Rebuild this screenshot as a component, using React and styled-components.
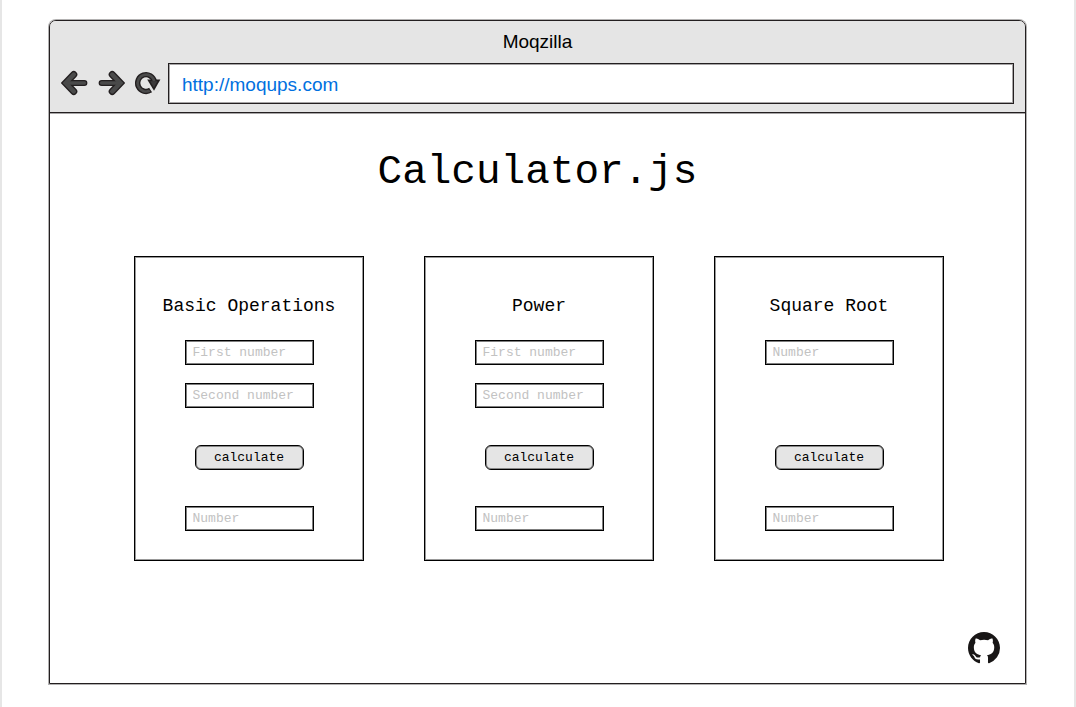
import React from "react";
import styled, { createGlobalStyle } from "styled-components";

const GlobalStyle = createGlobalStyle`
  *, *::before, *::after { box-sizing: border-box; }
  body { margin: 0; background: #fff; color: #000; }
`;

const mono = `"Liberation Mono", "Courier New", monospace`;
const sans = `"Liberation Sans", Arial, sans-serif`;

const Page = styled.div`
  min-height: 100vh;
  padding: 20px 48px 23px 47px;
  border: solid #e6e6e6;
  border-width: 0 2px;
  display: flex;
  flex-direction: column;
`;

const BrowserWindow = styled.div`
  flex: 1;
  display: flex;
  flex-direction: column;
  border: 1px solid #231f20;
  border-radius: 7px 7px 0 0;
  box-shadow: 0 0 0 1px rgba(35, 31, 32, 0.35);
  overflow: hidden;
`;

const Chrome = styled.header`
  background: #e5e5e5;
  border-bottom: 1px solid #231f20;
  box-shadow: 0 1px 0 rgba(35, 31, 32, 0.4);
  padding: 10px 11px 8px;
`;

const WindowTitle = styled.div`
  font: 19px/22px ${sans};
  text-align: center;
  margin-bottom: 10px;
`;

const Toolbar = styled.div`
  display: flex;
  align-items: center;
  gap: 8px;
`;

const NavButtons = styled.div`
  display: flex;
  gap: 10px;
  padding-bottom: 2px;
`;

const IconButton = styled.button`
  display: block;
  padding: 0;
  border: 0;
  background: none;

  svg { display: block; }
`;

const AddressBar = styled.input`
  flex: 1;
  min-width: 0;
  height: 41px;
  padding: 2px 13px 0;
  border: 1px solid #231f20;
  border-radius: 0;
  box-shadow: inset 0 0 0 1px rgba(35, 31, 32, 0.4);
  background: #fff;
  color: #0070e0;
  font: 19px/22px ${sans};
`;

const Content = styled.main`
  flex: 1;
  display: flex;
  flex-direction: column;
`;

const Title = styled.h1`
  margin: 36px 0 60px;
  font: 41px/47px ${mono};
  text-align: center;
`;

const Cards = styled.div`
  display: grid;
  grid-template-columns: repeat(3, 1fr);
  gap: 60px;
  padding: 0 81px 0 84px;
`;

const Card = styled.form`
  display: flex;
  flex-direction: column;
  align-items: center;
  padding: 38px 0 29px;
  border: 1px solid #000;
  box-shadow: inset 0 0 0 1px rgba(0, 0, 0, 0.4);
`;

const CardTitle = styled.h2`
  margin: 0 0 23px;
  font: 18px/22px ${mono};
`;

const Fields = styled.div`
  display: flex;
  flex-direction: column;
  gap: 18px;
  min-height: 68px;
`;

const Field = styled.input`
  width: 129px;
  height: 25px;
  padding: 0 7px 1px;
  border: 1px solid #000;
  border-radius: 0;
  box-shadow: inset 0 0 0 1px rgba(0, 0, 0, 0.5);
  background: #fff;
  font: 13px/16px ${mono};

  &::placeholder { color: #c2c2c2; opacity: 1; }
`;

const CalculateButton = styled.button`
  width: 109px;
  height: 25px;
  margin: 37px 0 36px;
  padding: 0;
  border: 1px solid #000;
  border-radius: 6px;
  box-shadow: inset 0 0 0 1px rgba(0, 0, 0, 0.4);
  background: #e5e5e5;
  color: #000;
  font: 13px/16px ${mono};
`;

const Footer = styled.footer`
  display: flex;
  justify-content: flex-end;
  margin-top: auto;
  padding: 0 25px 19px;
`;

const IconLink = styled.a`
  display: block;
  color: #181616;

  svg { display: block; }
`;

function ArrowIcon({ flip }) {
  return (
    <svg width="27" height="26" viewBox="0 0 27 26" fill="none" strokeLinecap="round">
      <g transform={flip ? "translate(27 0) scale(-1 1)" : undefined}>
        <g stroke="#231f20">
          <path d="M12.8 4.5 4.6 13l8.2 8.5" strokeWidth="7" />
          <path d="M6 13h17.4" strokeWidth="6" />
        </g>
        <g stroke="#4a4a4a">
          <path d="M12.8 4.5 4.6 13l8.2 8.5" strokeWidth="4.4" />
          <path d="M6 13h17.4" strokeWidth="3.4" />
        </g>
      </g>
    </svg>
  );
}

function ReloadIcon() {
  return (
    <svg width="25" height="26" viewBox="0 0 25 26" fill="none" overflow="visible">
      <path d="M19.3 11.5A8.4 8.4 0 1 0 15.6 20.1" stroke="#231f20" strokeWidth="5.4" />
      <path d="M12.2 9.6H25.4L19 20.8Z" fill="#231f20" />
      <path d="M19.3 11.5A8.4 8.4 0 1 0 14.8 20.6" stroke="#4a4a4a" strokeWidth="2.6" />
      <path d="M15.2 11.2h7.2l-3.5 6.2Z" fill="#3c3a3b" />
    </svg>
  );
}

function GitHubIcon() {
  return (
    <svg width="32" height="32" viewBox="0 0 16 16" fill="currentColor">
      <path d="M8 0C3.58 0 0 3.58 0 8c0 3.54 2.29 6.53 5.47 7.59.4.07.55-.17.55-.38 0-.19-.01-.82-.01-1.49-2.01.37-2.53-.49-2.69-.94-.09-.23-.48-.94-.82-1.13-.28-.15-.68-.52-.01-.53.63-.01 1.08.58 1.23.82.72 1.21 1.87.87 2.33.66.07-.52.28-.87.51-1.07-1.78-.2-3.64-.89-3.64-3.95 0-.87.31-1.59.82-2.15-.08-.2-.36-1.02.08-2.12 0 0 .67-.21 2.2.82.64-.18 1.32-.27 2-.27.68 0 1.36.09 2 .27 1.53-1.04 2.2-.82 2.2-.82.44 1.1.16 1.92.08 2.12.51.56.82 1.27.82 2.15 0 3.07-1.87 3.75-3.65 3.95.29.25.54.73.54 1.48 0 1.07-.01 1.93-.01 2.2 0 .21.15.46.55.38A8.013 8.013 0 0 0 16 8c0-4.42-3.58-8-8-8z" />
    </svg>
  );
}

const operations = [
  { title: "Basic Operations", fields: ["First number", "Second number"] },
  { title: "Power", fields: ["First number", "Second number"] },
  { title: "Square Root", fields: ["Number"] },
];

function OperationCard({ title, fields }) {
  return (
    <Card aria-label={title} onSubmit={(e) => e.preventDefault()}>
      <CardTitle>{title}</CardTitle>
      <Fields>
        {fields.map((label) => (
          <Field key={label} type="text" placeholder={label} aria-label={label} />
        ))}
      </Fields>
      <CalculateButton type="submit">calculate</CalculateButton>
      <Field type="text" placeholder="Number" aria-label="Result" readOnly />
    </Card>
  );
}

export default function App() {
  return (
    <>
      <GlobalStyle />
      <Page>
        <BrowserWindow>
          <Chrome>
            <WindowTitle>Moqzilla</WindowTitle>
            <Toolbar>
              <NavButtons>
                <IconButton type="button" aria-label="Back"><ArrowIcon /></IconButton>
                <IconButton type="button" aria-label="Forward"><ArrowIcon flip /></IconButton>
                <IconButton type="button" aria-label="Reload"><ReloadIcon /></IconButton>
              </NavButtons>
              <AddressBar type="text" aria-label="Address" defaultValue="http://moqups.com" />
            </Toolbar>
          </Chrome>
          <Content>
            <Title>Calculator.js</Title>
            <Cards>
              {operations.map((op) => (
                <OperationCard key={op.title} {...op} />
              ))}
            </Cards>
            <Footer>
              <IconLink href="#github" aria-label="GitHub"><GitHubIcon /></IconLink>
            </Footer>
          </Content>
        </BrowserWindow>
      </Page>
    </>
  );
}
